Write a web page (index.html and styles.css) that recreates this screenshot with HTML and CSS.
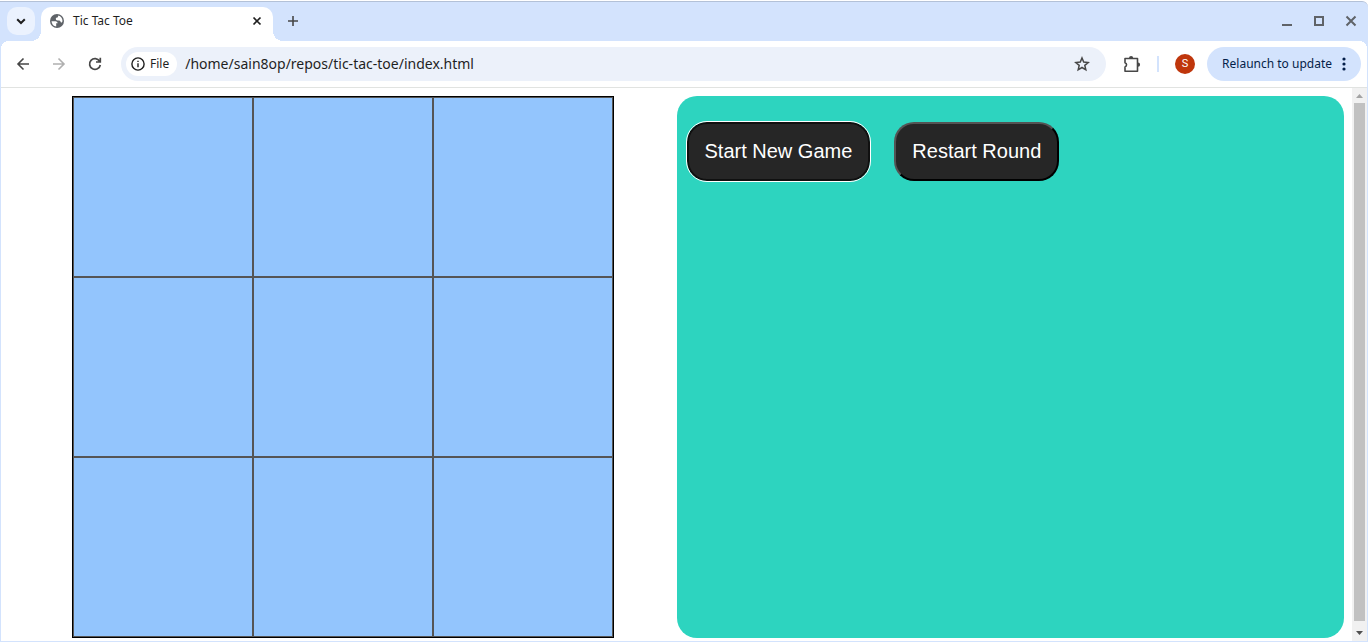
FILE: index.html
```html
<!DOCTYPE html>
<html lang="en">
<head>
<meta charset="utf-8">
<meta name="viewport" content="width=device-width, initial-scale=1">
<title>Tic Tac Toe</title>
<link rel="stylesheet" href="styles.css">
</head>
<body>
<div class="window">
  <header class="tabstrip">
    <button class="tab-search" aria-label="Search tabs">
      <svg width="12" height="12" viewBox="0 0 12 12" fill="none" stroke="#1f1f1f" stroke-width="2"><path d="M2.200 4.200 6 8l3.800-3.800"/></svg>
    </button>
    <div class="tab">
      <svg width="14" height="14" viewBox="0 0 14 14"><circle cx="7" cy="7" r="7" fill="#5f6368"/><path d="M1.500 7.200h4.300q1.900.3 1.900 2.100H6.200v3.300Q2 11.800 1.500 7.200ZM8.400 1.600Q12.300 2.800 12.500 7c-.2 1.300-.9 1.900-1.700 1.200-.6-1.300-1.300-1.700-3.100-1.600-1.500 0-1.900-.9-1.900-2 .1-.9.700-1.100 1.800-1.200Z" fill="#fff"/></svg>
      <span class="tab-title">Tic Tac Toe</span>
      <button class="icon-button tab-close" aria-label="Close tab">
        <svg width="10" height="10" viewBox="0 0 10 10" stroke="#1f1f1f" stroke-width="1.700"><path d="m1.500 1.500 7 7m0-7-7 7"/></svg>
      </button>
    </div>
    <button class="icon-button new-tab" aria-label="New tab">
      <svg width="12" height="12" viewBox="0 0 12 12" stroke="#474747" stroke-width="1.600"><path d="M6 1v10M1 6h10"/></svg>
    </button>
    <div class="window-controls">
      <button class="icon-button" aria-label="Minimize"><svg width="12" height="12" viewBox="0 0 12 12"><path d="M1 9h10v2H1z" fill="#5f6368"/></svg></button>
      <button class="icon-button" aria-label="Maximize"><svg width="12" height="12" viewBox="0 0 12 12" fill="none" stroke="#5f6368" stroke-width="2"><path d="M2 2h8v8H2z"/></svg></button>
      <button class="icon-button" aria-label="Close"><svg width="12" height="12" viewBox="0 0 12 12" stroke="#5f6368" stroke-width="2"><path d="m1.500 1.500 9 9m0-9-9 9"/></svg></button>
    </div>
  </header>
  <nav class="toolbar">
    <button class="icon-button" aria-label="Back"><svg width="14" height="14" viewBox="0 0 14 14" fill="none" stroke="#474747" stroke-width="1.600"><path d="M13 7H2m5.500-5.500L2 7l5.500 5.500"/></svg></button>
    <button class="icon-button" aria-label="Forward"><svg width="14" height="14" viewBox="0 0 14 14" fill="none" stroke="#b0b0b0" stroke-width="1.600"><path d="M1 7h11M6.500 1.500 12 7l-5.500 5.500"/></svg></button>
    <button class="icon-button" aria-label="Reload"><svg width="14" height="14" viewBox="0 0 14 14" fill="none" stroke="#474747" stroke-width="1.700"><path d="M12.300 8A5.400 5.400 0 1 1 11.600 4.200L12.300 5M12.300.8V5H8"/></svg></button>
    <div class="omnibox">
      <button class="chip">
        <svg width="14" height="14" viewBox="0 0 14 14" fill="none" stroke="#1f1f1f" stroke-width="1.400"><circle cx="7" cy="7" r="6.100"/><path d="M7 6.200v4M7 3.700v1.400"/></svg>
        File
      </button>
      <input class="address" type="text" aria-label="Address" value="/home/sain8op/repos/tic-tac-toe/index.html">
      <button class="icon-button" aria-label="Bookmark this tab"><svg width="16" height="16" viewBox="0 0 16 16" fill="none" stroke="#474747" stroke-width="1.500"><path d="m8 2 1.700 4.100 4.500.4-3.400 2.900 1 4.400L8 11.500l-3.800 2.300 1-4.400-3.400-2.900 4.500-.4Z"/></svg></button>
    </div>
    <button class="icon-button" aria-label="Extensions"><svg width="18" height="18" viewBox="0 0 18 18"><path d="M2 3.500h12.500v12.700H2v-4.300a2.200 2.200 0 0 0 0-4.200Z" fill="none" stroke="#474747" stroke-width="1.600" stroke-linejoin="round"/><path d="M6 3a2.100 2.100 0 0 1 4.200 0ZM15 7.600a2.100 2.100 0 0 1 0 4.200Z" fill="#474747"/></svg></button>
    <span class="separator"></span>
    <button class="avatar" aria-label="Profile">S</button>
    <button class="relaunch">Relaunch to update
      <svg width="4" height="14" viewBox="0 0 4 14" fill="#041e49"><circle cx="2" cy="2" r="1.600"/><circle cx="2" cy="7" r="1.600"/><circle cx="2" cy="12" r="1.600"/></svg>
    </button>
  </nav>
  <div class="viewport">
    <main class="page">
      <div class="board">
        <button class="cell" aria-label="Cell 1"></button>
        <button class="cell" aria-label="Cell 2"></button>
        <button class="cell" aria-label="Cell 3"></button>
        <button class="cell" aria-label="Cell 4"></button>
        <button class="cell" aria-label="Cell 5"></button>
        <button class="cell" aria-label="Cell 6"></button>
        <button class="cell" aria-label="Cell 7"></button>
        <button class="cell" aria-label="Cell 8"></button>
        <button class="cell" aria-label="Cell 9"></button>
      </div>
      <section class="panel">
        <button class="game-button focused">Start New Game</button>
        <button class="game-button">Restart Round</button>
      </section>
    </main>
    <div class="scrollbar">
      <svg width="15" height="15" viewBox="0 0 15 15"><path d="M4 10h7L7.500 6Z" fill="#a3a3a3"/></svg>
      <div class="thumb"></div>
      <svg width="15" height="20" viewBox="0 0 15 20"><path d="M4 10h7l-3.500 4Z" fill="#505050"/></svg>
    </div>
  </div>
</div>
</body>
</html>
```
FILE: styles.css
```css
* { box-sizing: border-box; }
body {
  margin: 0;
  background: #fff;
  font-family: "Noto Sans", sans-serif;
  font-size: 12px;
  color: #1f1f1f;
}
button, input { font: inherit; color: inherit; }
button { border: 0; padding: 0; background: none; cursor: pointer; }
svg { display: block; flex: none; }

.window {
  display: flex;
  flex-direction: column;
  min-height: 100vh;
  padding-top: 1px;
}

.tabstrip {
  display: flex;
  align-items: center;
  height: 40px;
  padding-left: 7px;
  background: #d3e3fd;
  border-top: 1px solid #b3c1d7;
  border-top-right-radius: 6px;
}
.tab-search {
  display: grid;
  place-items: center;
  width: 28px;
  height: 28px;
  margin-bottom: 2px;
  border-radius: 10px;
  background: #ebf2fe;
}
.tab {
  position: relative;
  display: flex;
  align-items: center;
  align-self: flex-end;
  gap: 9px;
  width: 232px;
  height: 34px;
  margin-left: 6px;
  padding: 0 8px 6px 9px;
  border-radius: 10px 10px 0 0;
  background: #fff;
}
.tab::before, .tab::after {
  content: "";
  position: absolute;
  bottom: 0;
  width: 10px;
  height: 10px;
}
.tab::before {
  right: 100%;
  background: radial-gradient(circle at 0 0, transparent 10px, #fff 10px);
}
.tab::after {
  left: 100%;
  background: radial-gradient(circle at 100% 0, transparent 10px, #fff 10px);
}
.tab-title { flex: 1; line-height: 16px; }
.icon-button {
  display: grid;
  place-items: center;
  flex: none;
  width: 28px;
  height: 28px;
  border-radius: 50%;
}
.tab-close { width: 16px; height: 16px; }
.new-tab { margin: 0 0 2px 6px; }
.window-controls { display: flex; gap: 4px; margin: 0 0 2px auto; padding-right: 3px; }

.toolbar {
  position: relative;
  display: flex;
  align-items: center;
  gap: 8px;
  height: 47px;
  padding: 0 6px 2px 8px;
  border: 1px solid #d3e3fd;
  border-width: 0 1px;
  box-shadow: inset 0 -1px #e1e3e1;
  background: #fff;
}
/* Strip colour behind the rounded toolbar corners */
.toolbar::before, .toolbar::after {
  content: "";
  position: absolute;
  top: 0;
  width: 8px;
  height: 8px;
}
.toolbar::before { left: 0; background: radial-gradient(circle at 100% 100%, transparent 8px, #d3e3fd 8px); }
.toolbar::after { right: 0; background: radial-gradient(circle at 0 100%, transparent 8px, #d3e3fd 8px); }

.omnibox {
  display: flex;
  align-items: center;
  flex: 1;
  min-width: 0;
  height: 34px;
  margin-left: 4px;
  padding: 0 10px 0 5px;
  border-radius: 17px;
  background: #ecf1fa;
}
.chip {
  display: flex;
  align-items: center;
  gap: 5px;
  height: 24px;
  padding: 0 8px 0 5px;
  border-radius: 12px;
  background: #fff;
}
.address {
  flex: 1;
  min-width: 0;
  height: 28px;
  padding: 0 8px;
  border: 0;
  background: none;
  font-size: 14px;
}
.omnibox + .icon-button { margin-left: 4px; }
.separator { width: 2px; height: 16px; margin-left: 3px; background: #d3e3fd; }
.avatar {
  width: 20px;
  height: 20px;
  margin: 0 4px 0 8px;
  border-radius: 50%;
  background: #bf360c;
  color: #fff;
  font-family: Roboto, sans-serif;
  font-size: 11px;
}
.relaunch {
  display: flex;
  align-items: center;
  gap: 10px;
  height: 34px;
  padding: 0 15px;
  border-radius: 17px;
  background: #d3e3fd;
  color: #041e49;
  white-space: nowrap;
}

.viewport {
  display: flex;
  flex: 1;
  border: 1px solid #d3e3fd;
  border-top: 0;
}
.page {
  display: grid;
  grid-template-columns: 1fr 1fr;
  flex: 1;
  padding: 8px 8px 3px;
}
.board {
  display: grid;
  grid-template-columns: repeat(3, 180px);
  grid-auto-rows: 180px;
  place-self: start center;
  border: 1px solid #000;
}
.cell { border: 1px solid #555; background: #93c5fd; }
.panel {
  display: flex;
  align-items: flex-start;
  gap: 24px;
  padding: 26px 10px;
  border-radius: 20px;
  background: #2dd4bf;
}
.game-button {
  padding: 16px;
  border: 2px outset #000;
  border-radius: 20px;
  background: #262626;
  color: #fff;
  font-family: "Liberation Sans", Arial, sans-serif;
  font-size: 20px;
  line-height: 23px;
}
.focused {
  border: 2px solid #101010;
  outline: 1px solid #fff;
}

.scrollbar {
  display: flex;
  flex-direction: column;
  align-items: center;
  width: 15px;
  background: #f1f1f1;
}
.thumb { flex: 1; width: 11px; background: #c1c1c1; }
```
